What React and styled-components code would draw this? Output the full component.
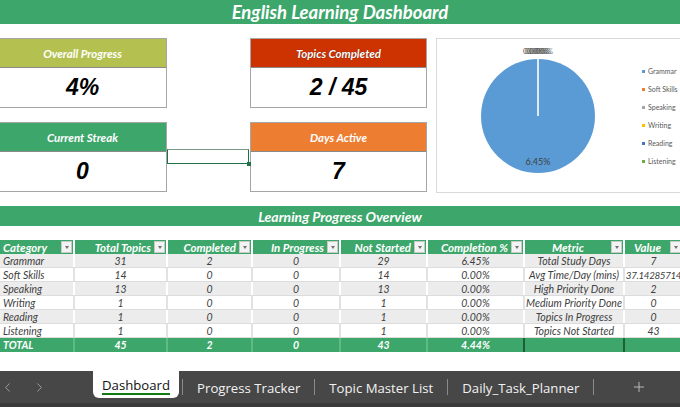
import React from 'react';
import styled, { createGlobalStyle } from 'styled-components';
import { ChevronLeft, ChevronRight, Plus } from 'lucide-react';

const GREEN = '#3da66b';

const GlobalStyle = createGlobalStyle`
	body {
		margin: 0;
		background: #fff;
		font-family: Lato, 'Liberation Sans', sans-serif;
		overflow: hidden;
	}
`;

const Page = styled('div')`
	width: 680px;
	height: 407px;
	display: flex;
	flex-direction: column;
	overflow: hidden;
`;

const TitleBar = styled('div')`
	height: 24px;
	background: ${GREEN};
	color: #fff;
	font-weight: 700;
	font-style: italic;
	font-size: 18.5px;
	display: flex;
	align-items: center;
	justify-content: center;
`;

const Top = styled('div')`
	display: flex;
	margin-top: 14px;
	margin-left: -2px;
`;

const Cards = styled('div')`
	position: relative;
	display: grid;
	grid-template-columns: 169px 177px;
	grid-template-rows: 70px 70px;
	column-gap: 83px;
	row-gap: 14px;
`;

const Card = styled('div')`
	display: flex;
	flex-direction: column;
	border: 1px solid #a6a6a6;
	box-sizing: border-box;
`;

const CardHead = styled('div')`
	height: 28px;
	background: ${p => p.color};
	border-bottom: 1px solid #8a8a8a;
	color: #fff;
	font-weight: 700;
	font-style: italic;
	font-size: 11.5px;
	display: flex;
	align-items: center;
	justify-content: center;
	text-shadow: ${p => (p.shadow ? '0 0 1px #5a1200' : 'none')};
`;

const CardValue = styled('div')`
	flex: 1;
	display: flex;
	align-items: center;
	justify-content: center;
	font-family: 'Liberation Sans', Arial, sans-serif;
	font-weight: 700;
	font-style: italic;
	font-size: 23px;
	color: #000;
`;

// active cell selection between the two bottom cards
const Selection = styled('div')`
	position: absolute;
	left: 169px;
	top: 111px;
	width: 82px;
	height: 15px;
	border: 1px solid #217346;
	border-top-color: #7a9a86;
	box-sizing: border-box;
	&::after {
		content: '';
		position: absolute;
		right: -3px;
		bottom: -3px;
		width: 4px;
		height: 4px;
		background: #217346;
	}
`;

const ChartBox = styled('div')`
	margin-left: 9px;
	width: 260px;
	height: 155px;
	border: 1px solid #d9d9d9;
	box-sizing: border-box;
`;

const SectionBar = styled('div')`
	margin-top: 13px;
	height: 20px;
	background: ${GREEN};
	color: #fff;
	font-weight: 700;
	font-style: italic;
	font-size: 14px;
	display: flex;
	align-items: center;
	justify-content: center;
`;

const Table = styled('div')`
	margin-top: 14px;
	display: flex;
	flex-direction: column;
`;

const Row = styled('div')`
	display: grid;
	grid-template-columns: 73px 91px 83px 86px 85px 95px 98px 57px;
	column-gap: 2px;
	height: 14px;
	background: ${p => p.sep};
	border-bottom: ${p => (p.line ? '1px solid #dcdcdc' : 'none')};
	box-sizing: border-box;
`;

const HeadCell = styled('div')`
	background: ${GREEN};
	color: #fff;
	font-weight: 700;
	font-style: italic;
	font-size: 11.5px;
	display: flex;
	align-items: center;
	overflow: hidden;
	white-space: nowrap;
`;

const HeadLabel = styled('span')`
	flex: 1;
	text-align: ${p => p.align || 'right'};
	padding: 0 3px;
`;

const Drop = styled('span')`
	width: 11px;
	height: 12px;
	margin-right: 1px;
	background: #f3f3f3;
	border: 1px solid #c9c9c9;
	box-sizing: border-box;
	display: flex;
	align-items: center;
	justify-content: center;
	&::before {
		content: '';
		border-left: 2.5px solid transparent;
		border-right: 2.5px solid transparent;
		border-top: 3px solid #707070;
	}
`;

const Cell = styled('div')`
	background: ${p => p.bg};
	color: ${p => (p.total ? '#fff' : '#404040')};
	font-weight: ${p => (p.total ? 700 : 400)};
	font-style: italic;
	font-size: ${p => (p.tight ? '9.8px' : '10.5px')};
	letter-spacing: ${p => (p.tight ? '-0.35px' : 'normal')};
	padding: 0 ${p => (p.align === 'left' ? '3px' : '0')};
	line-height: 14px;
	white-space: nowrap;
	overflow: hidden;
	display: flex;
	justify-content: ${p => (p.align === 'left' ? 'flex-start' : 'center')};
	border-left: ${p => (p.dark ? '2px solid #1f5c38' : 'none')};
	margin-left: ${p => (p.dark ? '-2px' : '0')};
`;

const TabBar = styled('div')`
	margin-top: auto;
	height: 36px;
	background: #474747;
	border-bottom: 4px solid #3a3a3a;
	box-sizing: border-box;
	display: flex;
	align-items: flex-start;
	font-family: 'Open Sans', 'Noto Sans', sans-serif;
	font-size: 13.2px;
	color: #f2f2f2;
`;

const Nav = styled('div')`
	display: flex;
	align-items: center;
	gap: 17px;
	height: 32px;
	width: 93px;
	color: #a8a8a8;
`;

const Tab = styled('div')`
	height: ${p => (p.active ? '27px' : '32px')};
	display: flex;
	align-items: center;
	padding: 0 ${p => (p.active ? '9px' : '14px')};
	background: ${p => (p.active ? '#fff' : 'transparent')};
	color: ${p => (p.active ? '#111' : '#f2f2f2')};
	border-radius: ${p => (p.active ? '0 0 6px 6px' : '0')};
	white-space: nowrap;
`;

const TabText = styled('span')`
	border-bottom: ${p => (p.active ? '2px solid #107c10' : '2px solid transparent')};
	line-height: 16px;
	margin-top: 3px;
`;

const Sep = styled('div')`
	width: 1px;
	height: 16px;
	margin-top: 8px;
	margin-left: ${p => p.ml || '0'};
	background: #8a8a8a;
`;

const AddTab = styled('div')`
	height: 32px;
	display: flex;
	align-items: center;
	margin-left: 37px;
	color: #c8c8c8;
`;

const cards = [
	{ title: 'Overall Progress', value: '4%', color: '#b4c150' },
	{ title: 'Topics Completed', value: '2 / 45', color: '#cc3300', shadow: true },
	{ title: 'Current Streak', value: '0', color: GREEN },
	{ title: 'Days Active', value: '7', color: '#ed7d31' }
];

const legend = [
	{ name: 'Grammar', color: '#5b9bd5' },
	{ name: 'Soft Skills', color: '#ed7d31' },
	{ name: 'Speaking', color: '#a5a5a5' },
	{ name: 'Writing', color: '#ffc000' },
	{ name: 'Reading', color: '#4472c4' },
	{ name: 'Listening', color: '#70ad47' }
];

const columns = [
	{ label: 'Category', align: 'left' },
	{ label: 'Total Topics' },
	{ label: 'Completed' },
	{ label: 'In Progress' },
	{ label: 'Not Started' },
	{ label: 'Completion %' },
	{ label: 'Metric', align: 'center' },
	{ label: 'Value', align: 'center' }
];

const rows = [
	['Grammar', '31', '2', '0', '29', '6.45%', 'Total Study Days', '7'],
	['Soft Skills', '14', '0', '0', '14', '0.00%', 'Avg Time/Day (mins)', '37.14285714'],
	['Speaking', '13', '0', '0', '13', '0.00%', 'High Priority Done', '2'],
	['Writing', '1', '0', '0', '1', '0.00%', 'Medium Priority Done', '0'],
	['Reading', '1', '0', '0', '1', '0.00%', 'Topics In Progress', '0'],
	['Listening', '1', '0', '0', '1', '0.00%', 'Topics Not Started', '43']
];

const totals = ['TOTAL', '45', '2', '0', '43', '4.44%', '', ''];

// zero-value slices all stack their labels at the top of the pie
const PieChart = () => (
	<svg width='258' height='153' viewBox='0 0 258 153'>
		<circle cx='101' cy='77' r='57' fill='#5b9bd5' />
		<line x1='101' y1='77' x2='101' y2='19' stroke='#fff' strokeWidth='1.6' />
		{[0, 1, 2, 3, 4].map(i => (
			<text
				key={i}
				x={97 + i * 2}
				y='15'
				textAnchor='middle'
				fontSize='8'
				fontFamily='Lato, sans-serif'
				fill={i === 4 ? '#8a8a8a' : '#595959'}
			>
				0.00%
			</text>
		))}
		<text x='101' y='126' textAnchor='middle' fontSize='9' fontFamily='Lato, sans-serif' fill='#404040'>
			6.45%
		</text>
		{legend.map((l, i) => (
			<g key={l.name}>
				<rect x='205' y={31 + i * 18} width='3' height='3' fill={l.color} />
				<text x='211' y={35 + i * 18} fontSize='7' fontFamily='Lato, sans-serif' fill='#595959'>
					{l.name}
				</text>
			</g>
		))}
	</svg>
);

const App = () => (
	<Page>
		<GlobalStyle />
		<TitleBar>English Learning Dashboard</TitleBar>
		<Top>
			<Cards>
				{cards.map(c => (
					<Card key={c.title}>
						<CardHead color={c.color} shadow={c.shadow}>
							{c.title}
						</CardHead>
						<CardValue>{c.value}</CardValue>
					</Card>
				))}
				<Selection />
			</Cards>
			<ChartBox>
				<PieChart />
			</ChartBox>
		</Top>
		<SectionBar>Learning Progress Overview</SectionBar>
		<Table>
			<Row sep='#fff'>
				{columns.map(col => (
					<HeadCell key={col.label}>
						<HeadLabel align={col.align}>{col.label}</HeadLabel>
						<Drop />
					</HeadCell>
				))}
			</Row>
			{rows.map((r, i) => {
				const shade = i % 2 === 0;
				return (
					<Row key={r[0]} sep={shade ? '#fff' : '#e2e2e2'} line>
						{r.map((v, j) => (
							<Cell
								key={j}
								bg={shade ? '#ececec' : '#fff'}
								align={j === 0 ? 'left' : 'center'}
								tight={j === 7 && v.length > 8}
							>
								{v}
							</Cell>
						))}
					</Row>
				);
			})}
			<Row sep='#5dbb86'>
				{totals.map((v, j) => (
					<Cell key={j} bg={GREEN} total align={j === 0 ? 'left' : 'center'} dark={j >= 6}>
						{v}
					</Cell>
				))}
			</Row>
		</Table>
		<TabBar>
			<Nav>
				<ChevronLeft size={15} strokeWidth={1.4} />
				<ChevronRight size={15} strokeWidth={1.4} />
			</Nav>
			<Tab active>
				<TabText active>Dashboard</TabText>
			</Tab>
			<Sep ml='3px' />
			<Tab>
				<TabText>Progress Tracker</TabText>
			</Tab>
			<Sep />
			<Tab>
				<TabText>Topic Master List</TabText>
			</Tab>
			<Sep />
			<Tab>
				<TabText>Daily_Task_Planner</TabText>
			</Tab>
			<Sep />
			<AddTab>
				<Plus size={16} strokeWidth={1.3} />
			</AddTab>
		</TabBar>
	</Page>
);

export default App;
